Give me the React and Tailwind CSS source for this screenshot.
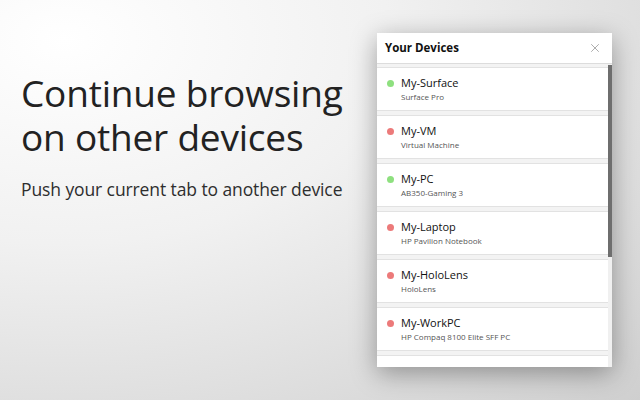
import { X } from "lucide-react";

const devices = [
  { name: "My-Surface", type: "Surface Pro", online: true },
  { name: "My-VM", type: "Virtual Machine", online: false },
  { name: "My-PC", type: "AB350-Gaming 3", online: true },
  { name: "My-Laptop", type: "HP Pavilion Notebook", online: false },
  { name: "My-HoloLens", type: "HoloLens", online: false },
  { name: "My-WorkPC", type: "HP Compaq 8100 Elite SFF PC", online: false },
  { name: "", type: "", online: false },
];

export default function App() {
  return (
    <div
      className="w-[640px] h-[400px] overflow-hidden flex bg-[radial-gradient(ellipse_at_10%_10%,#ffffff_0%,#f1f1f1_40%,#cfcfcf_100%)]"
      style={{ fontFamily: '"Open Sans", "Noto Sans", sans-serif' }}
    >
      <div className="flex-1 pl-[21px] pt-[71px]">
        <h1 className="flex flex-col text-[37px] leading-[44px] font-[500] text-[#222] tracking-[-0.2px]">
          <span className="h-[44px] overflow-visible">Continue browsing</span>
          <span className="h-[44px] overflow-visible">on other devices</span>
        </h1>
        <p className="mt-[17px] text-[17.5px] leading-[26px] text-[#2e2e2e] tracking-[-0.1px]">
          Push your current tab to another device
        </p>
      </div>

      <div className="w-[235px] h-[334px] mt-[33px] mr-[28px] bg-white shadow-[0_6px_24px_rgba(0,0,0,0.35)] flex flex-col overflow-hidden">
        <div className="h-[31px] shrink-0 flex items-center justify-between pl-[8px] pr-[10px] border-b border-[#dcdcdc]">
          <span className="text-[11.5px] font-bold text-[#111]">Your Devices</span>
          <X className="w-[14px] h-[14px] text-[#8a8a8a]" strokeWidth={1.2} />
        </div>
        <div className="relative flex-1 bg-[#f3f3f3] overflow-hidden">
          <div className="flex flex-col gap-[4px] pt-[3px] pr-[4px]">
            {devices.map((d, i) => (
              <div
                key={i}
                className="h-[44px] shrink-0 bg-white border-y border-[#e2e2e2] flex items-center pl-[10px]"
              >
                {d.name && (
                  <>
                    <span
                      className={`w-[7px] h-[7px] rounded-full mr-[7px] -mt-[12px] ${
                        d.online ? "bg-[#8ee07f]" : "bg-[#ec7a7a]"
                      }`}
                    />
                    <div className="flex flex-col">
                      <span className="text-[11px] leading-[14px] text-[#111]">{d.name}</span>
                      <span className="text-[8px] leading-[12px] text-[#555] mt-[1px]">{d.type}</span>
                    </div>
                  </>
                )}
              </div>
            ))}
          </div>
          <div className="absolute right-0 top-0 bottom-0 w-[4px] bg-[#f0f0f0]">
            <div className="h-[192px] mt-[1px] bg-[#6e6e6e]" />
          </div>
        </div>
      </div>
    </div>
  );
}
